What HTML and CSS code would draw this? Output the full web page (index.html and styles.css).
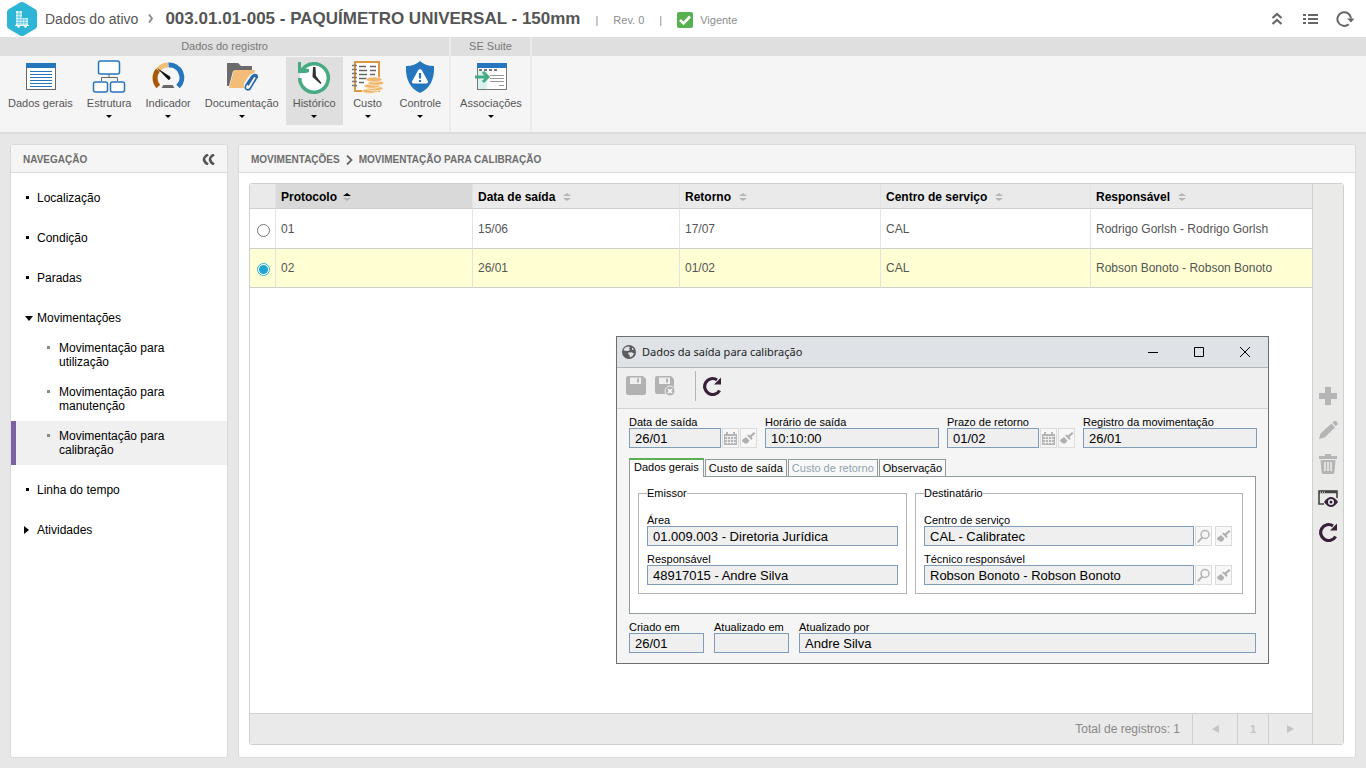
FILE: index.html
```html
<!DOCTYPE html>
<html lang="pt-BR">
<head>
<meta charset="utf-8">
<meta name="viewport" content="width=device-width, initial-scale=1">
<title>Dados do ativo</title>
<link rel="stylesheet" href="styles.css">
</head>
<body>
<svg class="defs" aria-hidden="true">
  <symbol id="i-cal" viewBox="0 0 15 15"><path fill="#b5b5b5" d="M1 3h2V1h2v2h5V1h2v2h2v11H1z"/><path stroke="#f5f5f5" stroke-width=".8" d="M2 5.500h11M2 8.500h11M2 11.500h11M4.500 5v8M7.500 5v8M10.500 5v8"/></symbol>
  <symbol id="i-brush" viewBox="0 0 15 15"><path fill="#b0b0b0" d="M13 1l1.500 1.500L10.500 6l1.200 1.500L10.500 9 6 4.500 7.500 3.500 9 4.500z"/><path fill="#b0b0b0" d="M5 6l3.500 3.500L6 13l-1-1-1 1-1-1.500L1.500 11 1 9z"/></symbol>
  <symbol id="i-search" viewBox="0 0 15 15"><circle cx="9" cy="5.500" r="4" fill="none" stroke="#b5b5b5" stroke-width="1.500"/><path stroke="#b5b5b5" stroke-width="2" d="m6.300 8.400-4.500 4.800"/></symbol>
  <symbol id="i-redo" viewBox="0 0 20 20"><path fill="none" stroke="#38203a" stroke-width="3.200" d="M17.600 14.500A8 8 0 1 1 15 3.800"/><path fill="#38203a" d="M19 1.500V8.500H12z"/></symbol>
</svg>

<header class="topbar">
  <svg class="logo" viewBox="0 0 30 34" aria-hidden="true"><path fill="#2cb5d5" d="M13 .6q2-1 4 0L28 7q2 1 2 3v14q0 2-2 3l-11 6.400q-2 1-4 0L2 27q-2-1-2-3V10q0-2 2-3z"/><path fill="#d8f5fb" d="M9 9h6v7h6v7H9z"/><path stroke="#2cb5d5" stroke-width=".6" d="M9 12h6M9 15h6M9 18h12M9 20.800h12M12 9v14M15 15v8M18 16v7"/><path stroke="#fff" d="M8 23.500h14"/><circle cx="11.500" cy="24.500" r="1.300" fill="#fff"/><circle cx="18.500" cy="24.500" r="1.300" fill="#fff"/></svg>
  <span class="crumb">Dados do ativo</span>
  <svg class="crumb-sep" viewBox="0 0 6 9" aria-hidden="true"><path fill="none" stroke="#888" stroke-width="1.800" d="m1 .5 3 4-3 4"/></svg>
  <h1>003.01.01-005 - PAQUÍMETRO UNIVERSAL - 150mm</h1>
  <div class="meta"><span>|</span><span>Rev. 0</span><span>|</span>
    <span class="status"><svg viewBox="0 0 16 16" width="16" height="16" aria-hidden="true"><rect width="16" height="16" rx="2" fill="#57b150"/><path fill="none" stroke="#fff" stroke-width="2.600" d="m3 8 3.500 3.500L13 4.500"/></svg>Vigente</span>
  </div>
  <div class="top-actions">
    <button type="button" aria-label="Recolher"><svg viewBox="0 0 18 18"><path fill="none" stroke="#666" stroke-width="2.200" d="m4.500 8 4.500-4 4.500 4M4.500 14l4.500-4 4.500 4"/></svg></button>
    <button type="button" aria-label="Lista"><svg viewBox="0 0 18 18"><path stroke="#666" stroke-width="2" d="M1 5h3M6 5h10M1 9h3M6 9h10M1 13h3M6 13h10"/></svg></button>
    <button type="button" aria-label="Atualizar"><svg viewBox="0 0 18 18"><path fill="none" stroke="#666" stroke-width="2" d="M12.700 14.200A6.800 6.800 0 1 1 15 8.500"/><path fill="#666" d="M11 8.500h7.500L15 12.500z"/></svg></button>
  </div>
</header>

<nav class="ribbon">
  <section class="group"><h2>Dados do registro</h2>
    <div class="tools">
      <button type="button" class="tool"><svg viewBox="0 0 34 34"><rect x="3.500" y="3.500" width="29" height="26" fill="#fff" stroke="#666"/><path fill="#2676bd" d="M3 3h30v5H3z"/><path stroke="#2676bd" d="M7 11.500h22M7 14.500h22M7 17.500h22M7 20.500h22M7 23.500h22M7 26.500h22"/></svg><span>Dados gerais</span></button>
      <button type="button" class="tool has-menu"><svg viewBox="0 0 34 34"><path fill="none" stroke="#666" d="M17 14v4M9.500 21v-3.500h16V21"/><g fill="#fff" stroke="#2676bd" stroke-width="1.500"><rect x="6.500" y="1" width="21" height="13" rx="2"/><rect x="1.500" y="22" width="14" height="10" rx="2"/><rect x="18.500" y="22" width="14" height="10" rx="2"/></g></svg><span>Estrutura</span></button>
      <button type="button" class="tool has-menu"><svg viewBox="0 0 34 34"><g fill="none" stroke-width="5"><path stroke="#a85a08" d="M7.300 26.500A12.500 12.500 0 0 1 7 10"/><path stroke="#f1bd78" d="M7 10a12.500 12.500 0 0 1 10-5"/><path stroke="#2676bd" d="M17.500 5a12.500 12.500 0 0 1 9.500 21.500"/></g><path fill="#111" d="m6 8 13 8.500q1.500 2.500-1.500 3.500z"/><path fill="#666" d="M12.500 25h9l2 3h-13z"/></svg><span>Indicador</span></button>
      <button type="button" class="tool has-menu"><svg viewBox="0 0 34 34"><path fill="#6b6b6b" d="M2 3h11l3 3h11v5H8L4 26H2z"/><path fill="#f1bd78" d="M9 10h21l-4 18H4z"/><path fill="none" stroke="#f5f5f5" stroke-width="4" d="m22 24 5-8q4-2 4 2l-6 10q-5 1-4-4l6-9"/><path fill="none" stroke="#2167ae" stroke-width="1.600" d="m23 25 5-8c2-2 4 0 3 2l-6 10c-3 2-6 0-4-4l6-9c3-3 6-1 5 2"/></svg><span>Documentação</span></button>
      <button type="button" class="tool has-menu active"><svg viewBox="0 0 34 34"><circle cx="17" cy="17" r="14" fill="#fff"/><path fill="none" stroke="#46aa82" stroke-width="3.500" d="M4.500 11A14.300 14.300 0 1 1 2.700 18"/><path fill="#46aa82" d="M1 2h3v6l8 1v3l-3 1H1z"/><path fill="#333" d="M16 7h2.500l.5 9 5.500 7-1 1-8-7z"/></svg><span>Histórico</span></button>
      <button type="button" class="tool has-menu"><svg viewBox="0 0 34 34"><rect x="4" y="2" width="24" height="29" fill="#fff" stroke="#db9744" stroke-width="2"/><path stroke="#666" stroke-width="1.400" d="M8 6.500h7M8 10.500h8M8 14.500h8M8 18.500h8M8 22.500h5M19 6.500h6M19 10.500h6M19 14.500h5"/><path stroke="#777" stroke-width="1.500" d="M1 5.500h5M1 9.500h5M1 13.500h5M1 17.500h5M1 21.500h5M1 25.500h5"/><g fill="#efb66c" stroke="#fff6e8" stroke-width=".8"><ellipse cx="19" cy="31" rx="8" ry="2.300"/><ellipse cx="24" cy="28.500" rx="8" ry="2.300"/><ellipse cx="21" cy="26" rx="8" ry="2.300"/><ellipse cx="25" cy="23" rx="8" ry="2.300"/><ellipse cx="23" cy="19.500" rx="8" ry="2.600"/></g></svg><span>Custo</span></button>
      <button type="button" class="tool has-menu"><svg viewBox="0 0 34 34"><path fill="#2676bd" d="M17 1q5 5 14 5 1 20-14 27Q2 26 3 6q9 0 14-5z"/><path fill="#fff" d="M17 9q1 0 2 1.500l6 11q0 2-1.500 2h-13q-2 0-1.500-2l6-11Q16 9 17 9z"/><path stroke="#2676bd" stroke-width="2.200" d="M17 13v5.500M17 20v2"/></svg><span>Controle</span></button>
    </div>
  </section>
  <section class="group"><h2>SE Suite</h2>
    <div class="tools">
      <button type="button" class="tool has-menu"><svg viewBox="0 0 34 34"><rect x="3.500" y="3.500" width="29" height="26" fill="#fff" stroke="#777"/><path fill="#2676bd" d="M3 3h30v5H3z"/><path fill="#d9f2f1" d="M4 11h9v18H4z"/><path stroke="#777" stroke-width="2" stroke-dasharray="3 2" d="M5 10h18"/><path stroke="#999" d="M16 15.500h14M16 18.500h14M16 21.500h14M25 25.500h5"/><path fill="none" stroke="#46aa82" stroke-width="3" d="M1 17h12M9 12l5 5-5 5"/></svg><span>Associações</span></button>
    </div>
  </section>
  <div class="ribbon-rest"></div>
</nav>

<div class="workspace">
  <aside class="panel sidebar">
    <header class="panel-head"><h2>NAVEGAÇÃO</h2>
      <button type="button" class="collapse" aria-label="Recolher navegação"><svg viewBox="0 0 13 11"><path fill="none" stroke="#555" stroke-width="2.600" d="M6 .5Q2 3 2 5.500T6 10.500M12 .5Q8 3 8 5.500t4 5"/></svg></button></header>
    <ul class="nav">
      <li><a href="#" class="dot">Localização</a></li>
      <li><a href="#" class="dot">Condição</a></li>
      <li><a href="#" class="dot">Paradas</a></li>
      <li><a href="#" class="open">Movimentações</a>
        <ul class="subnav">
          <li><a href="#">Movimentação para utilização</a></li>
          <li><a href="#">Movimentação para manutenção</a></li>
          <li><a href="#" class="current">Movimentação para calibração</a></li>
        </ul></li>
      <li><a href="#" class="dot">Linha do tempo</a></li>
      <li><a href="#" class="closed">Atividades</a></li>
    </ul>
  </aside>

  <main class="panel content">
    <header class="panel-head"><h2>MOVIMENTAÇÕES</h2><svg class="head-sep" viewBox="0 0 7 10" aria-hidden="true"><path fill="none" stroke="#666" stroke-width="1.800" d="m1 .5 4.500 4.500L1 9.500"/></svg><h2>MOVIMENTAÇÃO PARA CALIBRAÇÃO</h2></header>
    <div class="grid">
      <div class="grid-main">
        <table>
          <colgroup><col class="c-radio"><col class="c-prot"><col class="c-out"><col class="c-ret"><col class="c-center"><col></colgroup>
          <thead><tr><td></td>
            <th class="sorted" aria-sort="ascending"><button type="button">Protocolo<i></i></button></th><th><button type="button">Data de saída<i></i></button></th><th><button type="button">Retorno<i></i></button></th><th><button type="button">Centro de serviço<i></i></button></th><th><button type="button">Responsável<i></i></button></th></tr></thead>
          <tbody>
            <tr><td class="pick"><input type="radio" name="row" aria-label="Protocolo 01"></td><td>01</td><td>15/06</td><td>17/07</td><td>CAL</td><td>Rodrigo Gorlsh - Rodrigo Gorlsh</td></tr>
            <tr class="selected"><td class="pick"><input type="radio" name="row" aria-label="Protocolo 02" checked></td><td>02</td><td>26/01</td><td>01/02</td><td>CAL</td><td>Robson Bonoto - Robson Bonoto</td></tr>
          </tbody>
        </table>
        <footer class="pager"><span>Total de registros: 1</span><button type="button" class="wide" aria-label="Página anterior"><svg viewBox="0 0 7 8"><path d="M7 0v8L0 4z"/></svg></button><button type="button">1</button><button type="button" class="wide" aria-label="Próxima página"><svg viewBox="0 0 7 8"><path d="M0 0v8l7-4z"/></svg></button></footer>
      </div>
      <div class="side-actions">
        <button type="button" aria-label="Adicionar"><svg viewBox="0 0 20 20"><path fill="#b5b5b5" d="M7 1h6v6h6v6h-6v6H7v-6H1V7h6z"/></svg></button>
        <button type="button" aria-label="Editar"><svg viewBox="0 0 20 20"><path fill="#b5b5b5" d="M14.500 2.500 16 1q1.500-1 3 1t0 3l-1.200 1.200zM13.500 3.500l3.500 4-10.500 10L1 19l1.500-5.500z"/></svg></button>
        <button type="button" aria-label="Excluir"><svg viewBox="0 0 20 20"><path fill="#b5b5b5" d="M7 0h6v2h6v3H1V2h6zM2.500 6h15L16.500 18q0 2-2 2h-9q-2 0-2-2z"/><path stroke="#eaeae9" stroke-width="1.600" d="M7 8v9M10 8v9M13 8v9"/></svg></button>
        <button type="button" aria-label="Visualizar"><svg viewBox="0 0 20 20"><path fill="none" stroke="#444" stroke-width="1.600" d="M6 16H1V3h18v7"/><path stroke="#444" stroke-width="2.500" d="M1 4h18"/><path stroke="#eaeae9" stroke-dasharray="1 1" d="M2 4.200h5"/><path fill="#38203a" d="M6 14q7-10 14 0-7 10-14 0z"/><circle cx="13" cy="14" r="3" fill="#eee"/><circle cx="13" cy="14" r="1.500" fill="#38203a"/></svg></button>
        <button type="button" aria-label="Atualizar"><svg><use href="#i-redo"/></svg></button>
      </div>
    </div>
  </main>
</div>

<section class="dialog" role="dialog" aria-labelledby="dlg-title">
  <header class="dialog-title">
    <svg class="globe" viewBox="0 0 14 14" aria-hidden="true"><circle cx="7" cy="7" r="7" fill="#5c5c5c"/><path fill="#dfe2e7" d="M1.500 5 3 2.500 6 1.500l2 .5L7 3.500l1 1.500-2.500 1L3 5.800zM6.500 7.500l3-.3 2.500 1.300L10.500 11 8 12.500 7.500 10l-1.500-1zM10 2.500l2 2-2 .5z"/></svg>
    <h2 id="dlg-title">Dados da saída para calibração</h2>
    <div class="win-buttons">
      <button type="button" aria-label="Minimizar"><svg viewBox="0 0 12 12"><path d="M1 6.500h10"/></svg></button>
      <button type="button" aria-label="Maximizar"><svg viewBox="0 0 12 12"><path d="M1.500 1.500h9v9h-9z"/></svg></button>
      <button type="button" aria-label="Fechar"><svg viewBox="0 0 12 12"><path d="m1 1 10 10M11 1 1 11"/></svg></button>
    </div>
  </header>
  <div class="dialog-tools">
    <button type="button" aria-label="Salvar"><svg viewBox="0 0 20 20"><path fill="#b2b2b2" d="M2 0h15l3 3v14q0 2-2 2H2q-2 0-2-2V2q0-2 2-2z"/><path fill="#efefef" d="M4 1.500h11V8H4z"/><path fill="#b2b2b2" d="M11 2.500h2v4h-2z"/></svg></button>
    <button type="button" aria-label="Salvar e sair"><svg viewBox="0 0 20 20"><path fill="#b2b2b2" d="M2 0h14l3 3v15H2q-2 0-2-2V2q0-2 2-2z"/><path fill="#efefef" d="M4 1.500h11V8H4z"/><path fill="#b2b2b2" d="M11 2.500h2v4h-2z"/><circle cx="15" cy="15" r="5" fill="#b2b2b2" stroke="#efefef"/><path stroke="#fff" stroke-width="1.600" d="m13 13 4 4M17 13l-4 4"/></svg></button>
    <span class="divider"></span>
    <button type="button" aria-label="Recarregar"><svg><use href="#i-redo"/></svg></button>
  </div>
  <form class="dialog-body">
    <div class="row">
      <div class="field date"><label for="f1">Data de saída</label><div class="ctl"><input id="f1" value="26/01" readonly><button type="button" aria-label="Calendário"><svg><use href="#i-cal"/></svg></button><button type="button" aria-label="Limpar"><svg><use href="#i-brush"/></svg></button></div></div>
      <div class="field grow"><label for="f2">Horário de saída</label><div class="ctl"><input id="f2" value="10:10:00" readonly></div></div>
      <div class="field date"><label for="f3">Prazo de retorno</label><div class="ctl"><input id="f3" value="01/02" readonly><button type="button" aria-label="Calendário"><svg><use href="#i-cal"/></svg></button><button type="button" aria-label="Limpar"><svg><use href="#i-brush"/></svg></button></div></div>
      <div class="field grow"><label for="f4">Registro da movimentação</label><div class="ctl"><input id="f4" value="26/01" readonly></div></div>
    </div>
    <div class="tabs" role="tablist"><button type="button" role="tab" aria-selected="true">Dados gerais</button><button type="button" role="tab">Custo de saída</button><button type="button" role="tab" disabled>Custo de retorno</button><button type="button" role="tab">Observação</button></div>
    <div class="tab-panel">
      <fieldset class="emit"><legend>Emissor</legend>
        <div class="field"><label for="f5">Área</label><div class="ctl"><input id="f5" value="01.009.003 - Diretoria Jurídica" readonly></div></div>
        <div class="field"><label for="f6">Responsável</label><div class="ctl"><input id="f6" value="48917015 - Andre Silva" readonly></div></div>
      </fieldset>
      <fieldset class="dest"><legend>Destinatário</legend>
        <div class="field"><label for="f7">Centro de serviço</label><div class="ctl"><input id="f7" value="CAL - Calibratec" readonly><button type="button" aria-label="Pesquisar"><svg><use href="#i-search"/></svg></button><button type="button" aria-label="Limpar"><svg><use href="#i-brush"/></svg></button></div></div>
        <div class="field"><label for="f8">Técnico responsável</label><div class="ctl"><input id="f8" value="Robson Bonoto - Robson Bonoto" readonly><button type="button" aria-label="Pesquisar"><svg><use href="#i-search"/></svg></button><button type="button" aria-label="Limpar"><svg><use href="#i-brush"/></svg></button></div></div>
      </fieldset>
    </div>
    <div class="row audit">
      <div class="field short"><label for="f9">Criado em</label><div class="ctl"><input id="f9" value="26/01" readonly></div></div>
      <div class="field short"><label for="f10">Atualizado em</label><div class="ctl"><input id="f10" value="" readonly></div></div>
      <div class="field grow"><label for="f11">Atualizado por</label><div class="ctl"><input id="f11" value="Andre Silva" readonly></div></div>
    </div>
  </form>
</section>
</body>
</html>
```
FILE: styles.css
```css
* { box-sizing: border-box; }
body {
  margin: 0;
  min-height: 100vh;
  display: flex;
  flex-direction: column;
  position: relative;
  background: #e7e7e7;
  color: #000;
  font: 12px/14px "Liberation Sans", Arial, sans-serif;
}
h1, h2, ul { margin: 0; padding: 0; font-weight: inherit; font-size: inherit; }
ul { list-style: none; }
button { margin: 0; padding: 0; border: 0; background: none; font: inherit; color: inherit; }
a { color: inherit; text-decoration: none; }
svg { display: block; flex: none; }
.defs { width: 0; height: 0; position: absolute; }

/* Top bar */
.topbar { display: flex; align-items: center; height: 37px; padding: 0 12px 0 7px; background: #fff; }
.logo { width: 30px; height: 34px; }
.crumb { margin-left: 8px; font-size: 14px; color: #555; white-space: nowrap; }
.crumb-sep { width: 6px; height: 9px; margin: 0 11px 0 10px; }
h1 { font-size: 17px; line-height: 20px; font-weight: bold; color: #555; white-space: nowrap; }
.meta { display: flex; align-items: center; gap: 15px; margin: 3px 0 0 15px; font-size: 11px; color: #8b8f8d; white-space: nowrap; }
.status { display: flex; align-items: center; gap: 7px; }
.top-actions { display: flex; gap: 16px; margin-left: auto; }
.top-actions svg { width: 18px; height: 18px; }

/* Ribbon */
.ribbon { display: flex; height: 97px; background: #f5f5f5; border-bottom: 2px solid #dcdcdc; font-size: 11px; color: #555; }
.group { border-right: 2px solid #ebebeb; }
.group h2 { height: 19px; line-height: 18px; background: #dfdfdf; text-align: center; color: #777; }
.group + .group .tools { padding-left: 2px; }
.ribbon-rest { flex: 1; height: 19px; background: #dfdfdf; }
.tools { display: flex; padding: 1px 1px 0; }
.tool { display: flex; flex-direction: column; align-items: center; min-width: 50px; height: 68px; padding: 3px 7px 0; }
.tool svg { width: 34px; height: 34px; margin-bottom: 2px; }
.tool.has-menu::after { content: ""; margin-top: 5px; border: 3px solid transparent; border-top-color: #000; border-bottom: 0; }
.tool.active { background: #dfdfdf; }

/* Panels */
.workspace { flex: 1; display: flex; gap: 10px; padding: 10px 10px 10px; }
.panel { display: flex; flex-direction: column; background: #fff; border: 1px solid #dadada; border-radius: 3px; }
.sidebar { flex: 0 0 218px; }
.content { flex: 1; min-width: 0; }
.panel-head { display: flex; align-items: center; height: 28px; padding: 2px 12px 0; background: #f5f5f5; border-bottom: 1px solid #dadada; border-radius: 3px 3px 0 0; }
.panel-head h2 { font-size: 10px; font-weight: bold; color: #6d6d6d; }
.head-sep { width: 7px; height: 10px; margin: 0 6px; }
.collapse { margin-left: auto; }
.collapse svg { width: 13px; height: 11px; }

/* Navigation tree */
.nav { display: flex; flex-direction: column; gap: 10px; padding-top: 10px; }
.nav > li > a { display: flex; align-items: center; height: 30px; }
.nav > li > a::before { content: ""; margin: 0 8px 0 14px; }
.nav > li > .dot::before { width: 3px; height: 3px; margin: 0 8px 2px 15px; background: #000; }
.nav > li > .open::before { border: 4px solid transparent; border-top: 5px solid #000; border-bottom: 0; margin: 0 4px 0 14px; }
.nav > li > .closed::before { border: 4px solid transparent; border-left: 5px solid #000; border-right: 0; margin: 0 8px 0 13px; }
.subnav a { display: block; position: relative; padding: 8px 50px 8px 43px; border-left: 5px solid transparent; }
.subnav a::before { content: ""; position: absolute; left: 31px; top: 13px; width: 3px; height: 3px; background: #888; }
.subnav .current { background: #f0f0f0; border-left-color: #7b62a3; }

/* Records grid */
.grid { flex: 1; display: flex; margin: 10px 11px 12px 10px; border: 1px solid #cfcfcf; border-radius: 3px; }
.grid-main { flex: 1; display: flex; flex-direction: column; min-width: 0; }
table { width: 100%; table-layout: fixed; border-collapse: separate; border-spacing: 0; color: #555; }
.c-radio { width: 26px; }
.c-prot { width: 197px; }
.c-out { width: 207px; }
.c-ret { width: 201px; }
.c-center { width: 210px; }
th, td { padding: 0 5px; border-bottom: 1px solid #cfcfcf; border-right: 1px solid #e3e3e3; text-align: left; }
th { padding-top: 1px; }
th:last-child, td:last-child { border-right: 0; }
thead tr { height: 25px; background: #eaeaea; color: #000; }
tbody td { height: 39px; }
tbody tr:first-child td { height: 40px; }
th button { display: flex; align-items: center; font-weight: bold; }
th.sorted { background: #d9d9d9; }
th i { display: flex; flex-direction: column; gap: 2px; margin-left: 8px; }
th i::before, th i::after { content: ""; border: 4px solid transparent; }
th i::before { border-top: 0; border-bottom: 3px solid #b5b5b5; }
th i::after { border-bottom: 0; border-top: 3px solid #b5b5b5; }
th.sorted i { margin-left: 6px; }
th.sorted i::before { border-bottom-color: #000; }
.selected { background: #ffffd3; }
td.pick { padding: 3px 0 0 7px; }
.pick input { display: block; appearance: none; width: 13px; height: 13px; margin: 0; border: 1px solid #777; border-radius: 50%; background: #fff; }
.pick input:checked { border-color: #2cb5d5; background: radial-gradient(circle, #1fa5cf 0 4px, #fff 5px); }
.pager { display: flex; height: 31px; margin-top: auto; background: #eaeaea; border-top: 1px solid #cfcfcf; color: #888; line-height: 30px; }
.pager span { margin-left: auto; padding-right: 12px; }
.pager button { display: flex; align-items: center; justify-content: center; width: 31px; border-left: 1px solid #cfcfcf; color: #c4c4c4; font-weight: bold; font-size: 11px; }
.pager .wide { width: 45px; }
.pager button:last-child { width: 44px; }
.pager svg { width: 7px; height: 8px; fill: #c4c4c4; }
.side-actions { display: flex; flex: 0 0 31px; flex-direction: column; align-items: center; justify-content: center; gap: 14px; background: #eaeae9; border-left: 1px solid #cfcfcf; }
.side-actions svg { width: 20px; height: 20px; }

/* Floating window */
.dialog { position: absolute; left: 616px; top: 336px; width: 653px; border: 1px solid #6b6f70; background: #f5f5f5; font-size: 11px; line-height: 12px; }
.dialog-title { display: flex; align-items: center; height: 31px; padding: 0 17px 0 5px; background: #dfe2e7; border-bottom: 1px solid #b5b5b5; }
.globe { width: 14px; height: 14px; margin-right: 6px; }
.dialog-title h2 { font: 11px/16px "Noto Sans", "Open Sans", sans-serif; color: #222; }
.win-buttons { display: flex; gap: 34px; margin-left: auto; }
.win-buttons svg { width: 12px; height: 12px; fill: none; stroke: #000; }
.dialog-tools { display: flex; align-items: center; gap: 9px; height: 41px; padding: 0 9px 4px; background: #efefef; border-bottom: 1px solid #d2d2d2; }
.dialog-tools svg { width: 20px; height: 20px; }
.divider { width: 1px; height: 30px; margin: 0 -3px 0 11px; background: #b5b5b5; }
.dialog-body { padding: 7px 11px 10px 12px; }
.row { display: flex; gap: 8px; }
.audit { gap: 10px; margin: 7px 1px 0 0; }
.field label { display: block; white-space: nowrap; }
.date { flex: none; width: 128px; }
.short { flex: none; width: 75px; }
.grow { flex: 1; }
.ctl { display: flex; gap: 1px; }
.ctl input { flex: 1; min-width: 0; width: 100%; height: 20px; padding: 0 5px; border: 1px solid #7f9db9; border-radius: 0; background: #efefef; font: 13px/18px "Liberation Sans", Arial, sans-serif; color: #000; outline: 0; }
.ctl button { width: 17px; height: 20px; border: 1px solid #dcdcdc; background: #f7f7f7; }
.ctl svg { width: 15px; height: 15px; }
.tabs { display: flex; gap: 1px; height: 18px; margin-top: 10px; align-items: flex-end; }
.tabs button { height: 17px; padding: 0 3px; border: 1px solid #919b9c; border-bottom: 0; background: #f9f9f9; white-space: nowrap; }
.tabs button[aria-selected="true"] { position: relative; z-index: 1; height: 19px; margin-bottom: -1px; padding: 0 4px 4px; border-top: 2px solid #57b150; background: #fff; }
.tabs button:disabled { color: #8fa3ab; }
.tab-panel { display: flex; gap: 8px; margin-right: 1px; padding: 10px 12px 19px 8px; border: 1px solid #919b9c; background: #fff; }
fieldset { display: flex; flex-direction: column; gap: 7px; min-width: 0; margin: 0; padding: 15px 8px 8px; border: 1px solid #b5b5b5; }
legend { padding: 0; }
.emit { flex: 0 0 269px; }
.dest { flex: 1; padding-right: 10px; }
.dest .ctl button:last-child { margin-left: 2px; }
```
